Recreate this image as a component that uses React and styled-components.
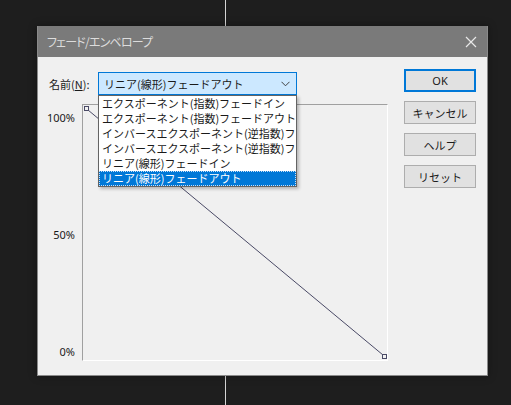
import React from "react";
import styled, { createGlobalStyle } from "styled-components";

const Global = createGlobalStyle`
  html, body { margin: 0; padding: 0; }
  body {
    width: 511px;
    height: 405px;
    overflow: hidden;
    background:
      linear-gradient(to right, transparent 225px, #d4d4d4 225px, #d4d4d4 226px, transparent 226px),
      #1e1e1e;
    font-family: "Noto Sans CJK JP", "Noto Sans", sans-serif;
  }
`;

const Stage = styled.div`
  padding: 26px 0 0 37px;
`;

const Dialog = styled.div`
  box-sizing: border-box;
  width: 451px;
  height: 350px;
  background: #f0f0f0;
  border: 1px solid #8a8a8a;
  border-top: none;
  box-shadow: 0 0 8px rgba(0, 0, 0, 0.35);
  display: flex;
  flex-direction: column;
`;

const TitleBar = styled.div`
  height: 31px;
  background: #7a7a7a;
  display: flex;
  align-items: center;
  justify-content: space-between;
  padding: 0 10px 0 9px;
  color: #dcdcdc;
`;

const Title = styled.span`
  font-size: 12px;
  font-feature-settings: "palt";
  letter-spacing: -0.8px;
  line-height: 1;
`;

const Close = styled.svg`
  width: 12px;
  height: 12px;
  display: block;
`;

const Body = styled.div`
  display: flex;
  align-items: flex-start;
  gap: 16px;
`;

const LeftCol = styled.div`
  width: 350px;
  margin-top: 15px;
  display: flex;
  flex-direction: column;
  gap: 9px;
`;

const NameRow = styled.div`
  display: flex;
  align-items: center;
  padding-left: 11px;
  gap: 8px;
  height: 23px;
`;

const Label = styled.span`
  font-size: 11px;
  color: #1a1a1a;
  width: 41px;
  white-space: nowrap;
  u { text-decoration: underline; }
`;

const ComboWrap = styled.div`
  position: relative;
`;

const Combo = styled.div`
  box-sizing: border-box;
  width: 199px;
  height: 23px;
  background: #cce8ff;
  border: 1px solid #0078d7;
  display: flex;
  align-items: center;
  justify-content: space-between;
  padding: 0 6px 0 5px;
  font-size: 11px;
  color: #1a1a1a;
`;

const Chevron = styled.svg`
  width: 9px;
  height: 6px;
  display: block;
`;

const List = styled.div`
  position: absolute;
  top: 23px;
  left: 0;
  box-sizing: border-box;
  width: 199px;
  background: #fff;
  border: 1px solid #646464;
  box-shadow: 2px 2px 3px rgba(0, 0, 0, 0.25);
  z-index: 2;
  overflow: hidden;
`;

const Item = styled.div`
  box-sizing: border-box;
  height: 15px;
  line-height: 15px;
  padding-left: 3px;
  font-size: 11px;
  white-space: nowrap;
  overflow: hidden;
  color: ${(p) => (p.$selected ? "#fff" : "#1a1a1a")};
  background: ${(p) => (p.$selected ? "#0078d7" : "transparent")};
  outline: ${(p) => (p.$selected ? "1px dotted #c8e0f8" : "none")};
  outline-offset: -1px;
`;

const GraphRow = styled.div`
  display: flex;
  gap: 7px;
`;

const Axis = styled.div`
  box-sizing: border-box;
  width: 37px;
  height: 257px;
  padding: 7px 0 2px;
  display: flex;
  flex-direction: column;
  justify-content: space-between;
  align-items: flex-end;
`;

const AxisLabel = styled.span`
  font-family: "Noto Sans", "Liberation Sans", sans-serif;
  font-size: 11px;
  line-height: 14px;
  color: #1a1a1a;
`;

const GraphBox = styled.div`
  box-sizing: border-box;
  width: 306px;
  height: 257px;
  border-left: 1px solid #a0a0a0;
  border-top: 1px solid #a0a0a0;
  border-right: 1px solid #ffffff;
  border-bottom: 1px solid #ffffff;
`;

const Plot = styled.svg`
  display: block;
  width: 304px;
  height: 255px;
`;

const Buttons = styled.div`
  padding-top: 12px;
  display: flex;
  flex-direction: column;
  gap: 9px;
`;

const Button = styled.button`
  box-sizing: border-box;
  width: 72px;
  height: 23px;
  margin: 0;
  padding: 0;
  background: #e1e1e1;
  border: ${(p) => (p.$default ? "2px solid #0078d7" : "1px solid #adadad")};
  font-family: "Noto Sans", "Noto Sans CJK JP", sans-serif;
  font-size: 11px;
  color: #1a1a1a;
  display: flex;
  align-items: center;
  justify-content: center;
`;

const items = [
  "エクスポーネント(指数)フェードイン",
  "エクスポーネント(指数)フェードアウト",
  "インバースエクスポーネント(逆指数)フェードイン",
  "インバースエクスポーネント(逆指数)フェードアウト",
  "リニア(線形)フェードイン",
  "リニア(線形)フェードアウト",
];

export default function App() {
  return (
    <>
      <Global />
      <Stage>
        <Dialog>
          <TitleBar>
            <Title>フェード/エンベロープ</Title>
            <Close viewBox="0 0 12 12">
              <path d="M1 1L11 11M11 1L1 11" stroke="#e8e8e8" strokeWidth="1.2" fill="none" />
            </Close>
          </TitleBar>
          <Body>
            <LeftCol>
              <NameRow>
                <Label>
                  名前(<u>N</u>):
                </Label>
                <ComboWrap>
                  <Combo>
                    <span>リニア(線形)フェードアウト</span>
                    <Chevron viewBox="0 0 9 6">
                      <path d="M0.5 0.8L4.5 4.8L8.5 0.8" stroke="#404040" strokeWidth="1" fill="none" />
                    </Chevron>
                  </Combo>
                  <List>
                    {items.map((t, i) => (
                      <Item key={i} $selected={i === items.length - 1}>
                        {t}
                      </Item>
                    ))}
                  </List>
                </ComboWrap>
              </NameRow>
              <GraphRow>
                <Axis>
                  <AxisLabel>100%</AxisLabel>
                  <AxisLabel>50%</AxisLabel>
                  <AxisLabel>0%</AxisLabel>
                </Axis>
                <GraphBox>
                  <Plot viewBox="0 0 304 255">
                    <line x1="5" y1="5" x2="300" y2="250" stroke="#4a4a66" strokeWidth="1" />
                    <rect x="1.5" y="1.5" width="4" height="4" fill="#f0f0f0" stroke="#4a4a66" strokeWidth="1" />
                    <rect x="299.5" y="249.5" width="4" height="4" fill="#f0f0f0" stroke="#4a4a66" strokeWidth="1" />
                  </Plot>
                </GraphBox>
              </GraphRow>
            </LeftCol>
            <Buttons>
              <Button $default>OK</Button>
              <Button>キャンセル</Button>
              <Button>ヘルプ</Button>
              <Button>リセット</Button>
            </Buttons>
          </Body>
        </Dialog>
      </Stage>
    </>
  );
}
